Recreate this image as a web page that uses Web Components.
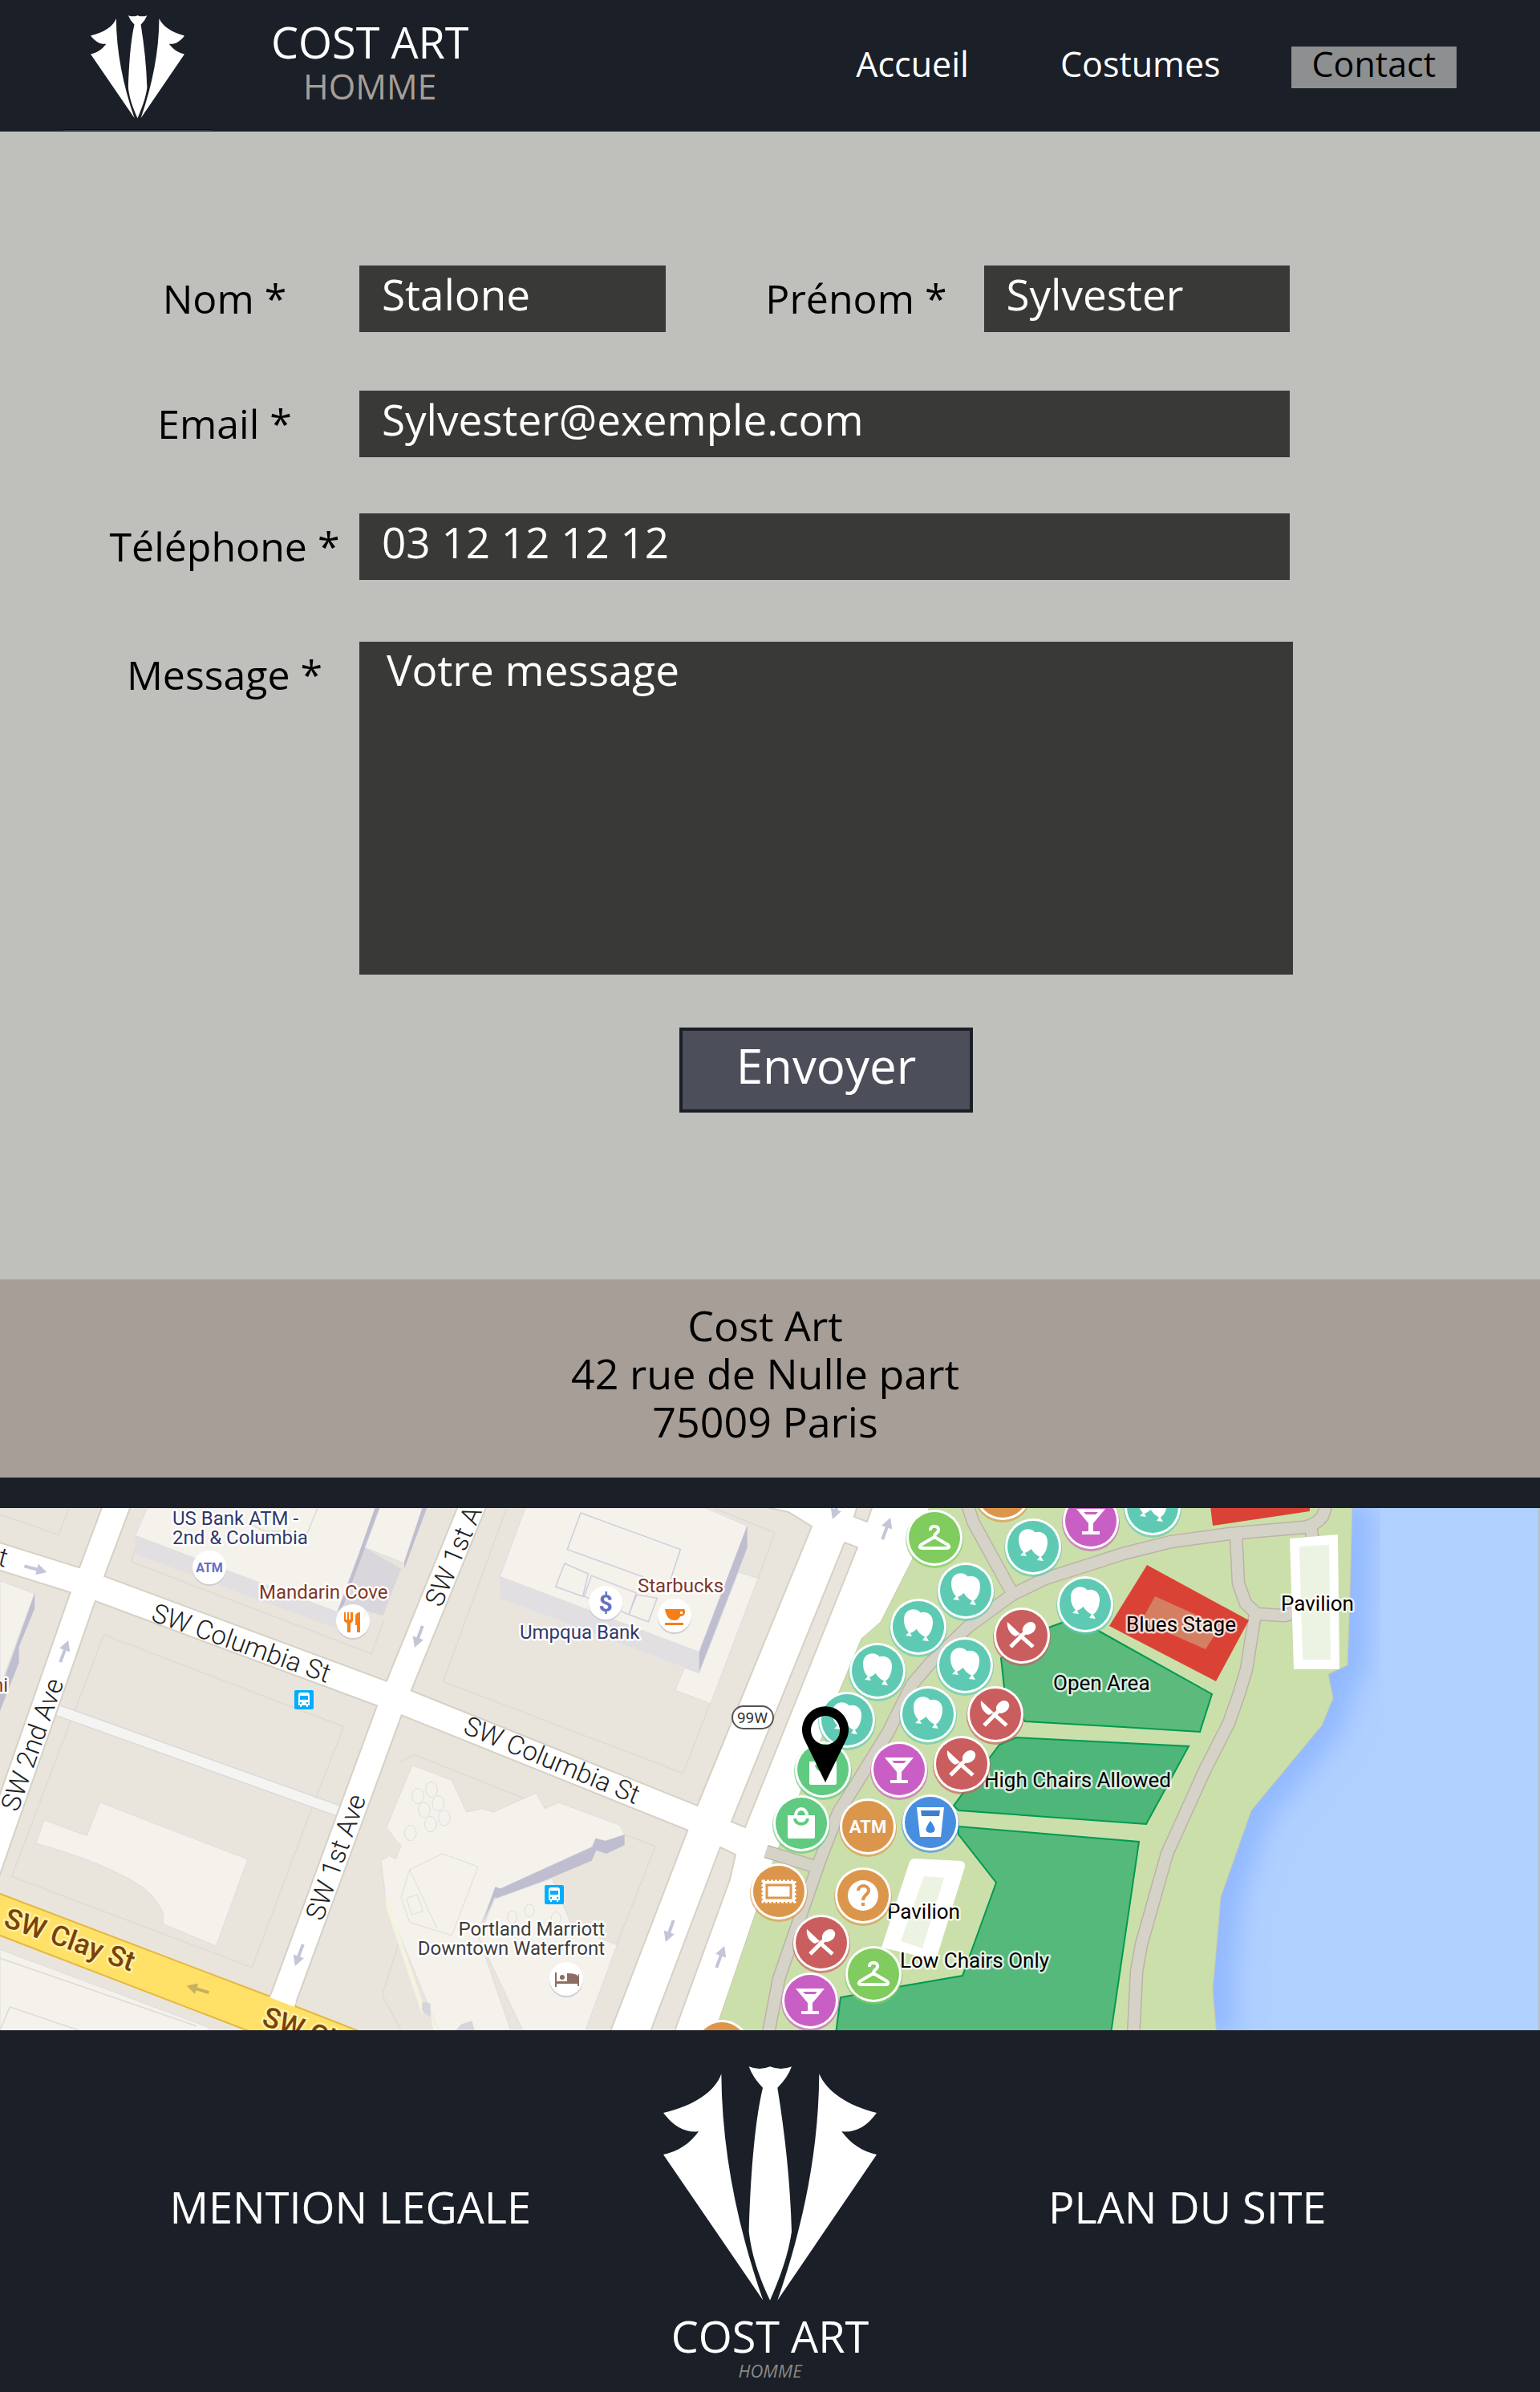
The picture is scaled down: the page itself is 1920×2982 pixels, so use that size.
<!DOCTYPE html>
<html lang="fr">
<head>
<meta charset="utf-8">
<meta name="viewport" content="width=device-width, initial-scale=1">
<title>Cost Art Homme - Contact</title>
<style>
body{margin:0;background:#bfbfbc;font-family:"Open Sans","Noto Sans",sans-serif;color:#000;
--ink:#1b1f27;--field:#393937;--taupe:#a69e97;--title:54px;--input:53px;--text:52px;--label-size:50px;--nav:43px}
</style>
</head>
<body>
<cost-header>
  <cost-link href="#accueil">Accueil</cost-link>
  <cost-link href="#costumes">Costumes</cost-link>
  <cost-link href="#contact" current>Contact</cost-link>
</cost-header>
<cost-form></cost-form>
<cost-address><span>Cost Art</span><span>42 rue de Nulle part</span><span>75009 Paris</span></cost-address>
<cost-map></cost-map>
<cost-footer></cost-footer>
<script>
const define = (name, html, setup) => customElements.define(name, class extends HTMLElement {
  constructor() {
    super();
    this.attachShadow({mode: 'open'});
  }
  connectedCallback() {
    this.shadowRoot.innerHTML = typeof html === 'function' ? html(this) : html;
    if (setup) setup(this);
  }
});

define('cost-logo', `
<style>:host{display:block}svg{display:block;width:100%;height:auto}</style>
<svg viewBox="205 107 798 876" fill="#fff" role="img" aria-label="Cost Art">
<path d="M422 135C400 200 320 255 205 281C245 333 285 355 337 351C305 395 260 427 205 437L578 982C480 700 424 420 422 135Z"/>
<path d="M788 135C815 200 895 255 1003 281C965 333 925 355 872 351C905 395 950 427 1003 437L632 982C730 700 786 420 788 135Z"/>
<path d="M525 108Q565 124 604 108Q645 124 685 108Q670 150 632 187C660 360 680 540 685 725C672 815 640 900 604 982C565 900 535 815 525 725C530 540 545 320 577 187Q540 150 525 108Z"/>
</svg>`);

define('cost-link', el => `
<style>
:host{display:block}
a{display:block;font-size:var(--nav);line-height:44px;padding:0 26px 8px;color:#fff;text-decoration:none}
:host([current]) a{background:#8e8f91;color:#000}
</style>
<a href="${el.getAttribute('href')}"${el.hasAttribute('current') ? ' aria-current="page"' : ''}><slot></slot></a>`);

define('cost-header', `
<style>
:host{display:flex;justify-content:space-between;align-items:flex-start;background:var(--ink);height:164px;padding:0 104px 0 79px;box-sizing:border-box}
.brand{display:flex;gap:74px}
.mark{width:185px;height:162px;box-sizing:border-box;padding:19px 34px 0;border-bottom:1px solid #0b0e13;box-shadow:0 1px #3a3e46}
.name{padding-top:24px;text-align:center;line-height:56px;color:#fff;font-size:var(--title)}
.name small{display:block;font-size:var(--nav);color:var(--taupe)}
nav{display:flex;gap:62px;padding-top:58px}
</style>
<div class="brand"><div class="mark"><cost-logo></cost-logo></div>
<div class="name">COST ART<small>HOMME</small></div></div>
<nav><slot></slot></nav>`);

define('cost-field', el => {
  const id = el.getAttribute('name'), type = el.getAttribute('type') || 'text';
  const control = type === 'area'
    ? `<textarea id="${id}" name="${id}" required>${el.getAttribute('value')}</textarea>`
    : `<input id="${id}" name="${id}" type="${type}" value="${el.getAttribute('value')}" required>`;
  return `
<style>
:host{display:flex;gap:24px;align-items:flex-start;flex:1 1 calc(var(--label,288px) + 24px);min-width:0}
label{flex:none;width:var(--label,288px);box-sizing:border-box;padding:7px var(--label-end,0) 0 0;font-size:var(--label-size);line-height:68px;white-space:nowrap;display:flex;justify-content:var(--label-align,center)}
input,textarea{flex:1 1 0;width:0;min-width:0;box-sizing:border-box;border:0;border-radius:0;margin:0;background:var(--field);color:#fff;font:var(--input)/70px "Open Sans","Noto Sans",sans-serif;outline-offset:2px}
input{height:83px;padding:0 28px 13px}
textarea{height:415px;padding:0 34px;resize:none;overflow:hidden}
</style>
<label for="${id}">${el.getAttribute('label')} *</label>${control}`;
});

define('cost-form', `
<style>
:host{display:block;padding:167px 312px 208px 136px}
form{display:grid;grid-template-rows:156px 153px 160px auto auto}
.row{display:flex;gap:24px;align-items:flex-start}
.end{--label:349px;--label-end:22px;--label-align:flex-end}
.wide{margin-right:-4px}
.send{padding:66px 0 0 312px;display:flex;justify-content:center}
button{width:366px;height:106px;padding:0 0 12px;border:4px solid var(--ink);border-radius:0;background:#4c4e5a;color:#fff;font:60px/80px "Open Sans","Noto Sans",sans-serif}
</style>
<form>
<div class="row"><cost-field name="nom" label="Nom" value="Stalone"></cost-field>
<cost-field class="end" name="prenom" label="Prénom" value="Sylvester"></cost-field></div>
<div class="row"><cost-field name="email" type="email" label="Email" value="Sylvester@exemple.com"></cost-field></div>
<div class="row"><cost-field name="telephone" type="tel" label="Téléphone" value="03 12 12 12 12"></cost-field></div>
<div class="row wide"><cost-field name="message" type="area" label="Message" value="Votre message"></cost-field></div>
<div class="send wide"><button type="submit">Envoyer</button></div>
</form>`);

define('cost-address', `
<style>
:host{display:block;background:var(--taupe);border-bottom:38px solid var(--ink)}
address{display:flex;flex-direction:column;align-items:center;padding:27px 12px 40px 0;font-style:normal;font-size:var(--text);line-height:60px}
</style>
<address><slot></slot></address>`);

/* Marker glyphs, drawn around the centre of a disc of radius 32. */
const glyphs = {
  balloon: '<g fill="#fff"><path d="M-18-9C-18-25 2-25 4-14C6-4-4 7-11 8C-16 4-18-3-18-9ZM-11 6L-8 12L-16 11Z"/><path d="M-5-8C-4-22 18-22 18-6C18 3 14 11 9 13C2 10-5 3-5-8ZM9 11L13 18L5 17Z"/></g>',
  food: '<path d="M-14 14L6-6M14 14L-3-1" stroke="#fff" stroke-width="5"/><ellipse cx="9" cy="-9" rx="9" ry="7" transform="rotate(-40 9 -9)" fill="#fff"/><path d="M-18-17L-2-2L-8 1C-15-2-19-9-18-17Z" fill="#fff"/>',
  hanger: '<path d="M-5-9C-6-16 6-16 5-9C4-5 0-6 0-1L-17 9Q-20 13-15 13H15Q20 13 17 9L0-1" fill="none" stroke="#fff" stroke-width="4" stroke-linejoin="round"/>',
  drink: '<path d="M-18-15H18L3 3V13H11V17H-11V13H-3V3ZM-9-11L-6-8H6L9-11Z" fill="#fff" fill-rule="evenodd"/>',
  bag: '<path d="M-17-10H17V17Q17 19 14 19H-14Q-17 19-17 17Z" fill="#fff"/><path d="M-7-9C-7-21 7-21 7-9" fill="none" stroke="#fff" stroke-width="4"/><path d="M-8-6C-7 3 7 3 8-6" fill="none" stroke="#5fca80" stroke-width="4"/>',
  water: '<path d="M-17-19H17L13 18H-13Z" fill="#fff"/><path d="M-12-15H12L11-8H-11Z" fill="#3f7fd0"/><path d="M0-2Q11 12 0 13Q-11 12 0-2Z" fill="#3f87e0"/>',
  ticket: '<path d="M-20-13H20V13H-20Z" fill="#fff" stroke="#fff" stroke-width="3" stroke-dasharray="3 2"/><path d="M-15-8H15V8H-15Z" fill="#fff" stroke="#dc964c" stroke-width="3"/>',
  help: '<circle r="19" fill="#fff"/><path d="M-6-6C-6-14 7-14 7-6C7-1 0-1 0 6M0 9V13" fill="none" stroke="#dc964c" stroke-width="4"/>',
  none: '', atm: ''
};
const marker = (kind, colour, x, y) =>
  `<g transform="translate(${x} ${y})"><circle r="36" cy="2" fill="${colour}" opacity=".65"/><circle r="35" fill="#fff"/><circle r="32" fill="${colour}"/>${glyphs[kind]}</g>`;
const T='#5ecab3', R='#ca5e5e', P='#c95fc4', O='#dc964c', L='#80cc5f', G='#5fca80', B='#488ee0';
const markers = [
  ['none',O,1250,-20],['drink',P,1360,16],['balloon',T,1437,-1],['hanger',L,1165,37],['balloon',T,1288,48],
  ['balloon',T,1204,103],['balloon',T,1353,120],['balloon',T,1145,148],['balloon',T,1203,196],['food',R,1274,159],
  ['balloon',T,1094,203],['balloon',T,1056,264],['balloon',T,1157,257],['food',R,1241,257],['bag',G,1026,326],
  ['drink',P,1121,326],['food',R,1199,319],['bag',G,999,393],['atm',O,1082,397],['water',B,1160,392],
  ['ticket',O,971,478],['help',O,1076,483],['food',R,1024,542],['drink',P,1010,614],['hanger',L,1089,581],['none',O,900,673]
].map(m => marker(...m)).join('');
const arrow = (x, y, a, c = '#c3c6d8') =>
  `<path transform="translate(${x} ${y}) rotate(${a})" fill="${c}" d="M-14-2H2V-7L15 0L2 7V2H-14Z"/>`;
const arrows = arrow(44,76,15)+arrow(80,179,-70)+arrow(522,160,110)+arrow(373,557,110)+arrow(247,600,197,'#c7b05f')+
  arrow(835,527,110)+arrow(898,560,-70)+arrow(1105,26,-70)+arrow(1043,0,110);
const bus = (x, y) => `<g transform="translate(${x} ${y})"><rect width="24" height="24" rx="2" fill="#00aeff"/><path d="M5 6Q5 3 8 3H16Q19 3 19 6V19H17V21H15V19H9V21H7V19H5Z" fill="#fff"/><path d="M7 7H17V12H7ZM7 15h2v2H7zM15 15h2v2h-2z" fill="#00aeff"/></g>`;
const shore = 'M1686-5L1683 110L1680 196L1656 207L1662 237L1648 271L1560 377L1522 485L1517 544L1512 600L1517 660';
const walks = `
<path d="M1655-8L1649 10Q1640 22 1625 24L1533 32L1460 42L1400 57L1360 70L1303 88L1262 108L1207 148L1160 193L1137 220L1107 280L1073 335L1045 380L1023 437L993 523L971 587L957 660"/>
<path d="M1206-5L1213 17L1262 106"/><path d="M955 428L1019 448"/>
<path d="M1541 34L1544 94L1553 119L1567 132L1600 134Q1612 134 1626 117L1642 95L1643 72L1634 24"/>
<path d="M1565 132L1554 201L1545 231L1532 268L1502 327L1455 431L1423 544L1417 578L1413 660"/>`;

define('cost-map', `
<style>
:host{display:block;background:#1b1f27}
svg{display:block;width:100%;height:auto}
text{font-family:Roboto,sans-serif;font-size:24px}
.halo{paint-order:stroke;stroke:#fff;stroke-width:5px;stroke-linejoin:round}
.road{font-size:33px;font-weight:300;fill:#222}
.clay{font-size:35px;font-weight:500;fill:#7a4306;paint-order:stroke;stroke:#fff0a8;stroke-width:5px}
.bank{fill:#33386a}.eat{fill:#7f3529}.hotel{fill:#3d3d3d}
.area{font-size:26px;fill:#000;stroke-opacity:.75}
.roof{fill:#f4f2eb;stroke:#dedce2;stroke-width:1px}.front{fill:#e1dfe1}.side{fill:#bfbed0}
.z path,.z circle{vector-effect:non-scaling-stroke}
.lot{fill:none;stroke:#dedad5;stroke-width:1.5px}
</style>
<svg viewBox="0 0 1920 651" role="img" aria-label="Plan du quartier">
<defs><clipPath id="water"><path d="${shore}H1930V-5Z"/></clipPath><filter id="soft" x="-20%" y="-20%" width="140%" height="140%"><feGaussianBlur stdDeviation="17"/></filter></defs>
<rect width="1920" height="651" fill="#e9e5dd"/>
<g class="z" transform="scale(.40816 .43367) translate(0 -46)">
<path class="lot" d="M0 65L180 123L210 46M445 80L400 200L1135 465L1172 370M317 410L232 620L215 660L36 1105L770 1367L950 915L1050 675Z"/>
<path class="roof" d="M450 46H1155L1115 165L1030 345L413 125Z"/><path class="front" d="M413 125L1030 345L1025 392L413 178Z"/>
<path class="side" d="M1145 46H1162L1115 165L1050 325L1030 345L1095 180Z"/><path class="roof" d="M1160 46H1290L1235 205L1115 160Z"/>
<path fill="#d9d6dc" d="M1115 160L1225 220L1170 355L1050 325Z"/><path class="side" d="M1290 46H1304L1235 220V200Z"/>
<path class="lot" d="M970 46L938 120M760 90L810 113H890"/>
<path class="roof" d="M0 255L106 292L0 560Z"/><path class="side" d="M106 290V335L58 445V490L0 630V570L50 440Z"/>
<path class="roof" d="M135 943L265 988L305 892L757 1056L660 1305L498 1242V1210Q470 1150 405 1118Q300 1060 110 1010Z"/>
<path class="roof" d="M0 1315L640 1540V1570H0Z"/><path class="lot" d="M0 1340L600 1535M30 1480L0 1547M30 1480L240 1547"/>
</g>
<g class="z" transform="translate(500 0) scale(.33333 .43367) translate(0 -46)">
<path class="lot" d="M395 46L157 545L1055 808L1155 610M1170 46L1398 117L1335 250M0 775L50 755L540 905M835 985L952 1018L680 1547M0 1547L-70 1448L30 1200"/>
<path class="roof" d="M465 46H1140L1295 97L1115 460L370 243Z"/><path class="front" d="M370 243L1115 460V520L370 305Z"/><path class="side" d="M1295 97V160L1115 520V460Z"/>
<path class="roof" d="M1262 230L1335 248L1158 608L1025 570L1060 505L1115 520Z"/>
<path class="lot" style="stroke:#cfcddd" d="M672 60L622 165L1000 270L1045 165ZM612 205L578 272L680 300L700 235ZM712 240L685 300L852 352L880 290ZM882 295L852 352L925 373L958 305Z"/>
<path class="roof" d="M42 785L190 828L245 920L305 910L345 920L505 865L538 910L590 893L820 958L836 985L765 1003L728 996L715 1020L372 1140H352L300 1240L290 1280L410 1547H140L-55 1180L-75 1060L-45 1045L-20 1055L0 1018L-55 965Z"/>
<path class="side" d="M836 985V1015L768 1040L730 1030L713 1060L372 1170L350 1165L305 1240L352 1135L372 1140L715 1020L728 996L765 1003Z"/>
<path class="roof" d="M565 1110L640 1250L808 1302L690 1547H455L290 1280L350 1170Z"/>
<path class="roof" d="M155 1040L288 1077L190 1275L32 1237L0 1165L32 1085ZM32 1085L135 1255M20 1168L60 1157L82 1205L40 1215Z"/>
<path fill="#f3f4df" d="M-60 1150L80 1465V1505L-55 1195ZM110 1490L140 1547H120Z"/><path fill="#d6d4dc" d="M80 1465L110 1470V1510L78 1490ZM225 1530L265 1520L275 1547H205Z"/>
<g class="roof"><circle cx="63" cy="874" r="22"/><circle cx="114" cy="855" r="22"/><circle cx="139" cy="895" r="22"/><circle cx="87" cy="914" r="22"/><circle cx="162" cy="937" r="22"/><circle cx="111" cy="955" r="22"/><circle cx="35" cy="980" r="22"/><circle cx="416" cy="1222" r="18"/><circle cx="480" cy="1203" r="18"/><circle cx="580" cy="1225" r="18"/></g>
</g>
<g fill="none"><path stroke="#dad8da" stroke-width="15" d="M66 250L426 379"/><path stroke="#f4f4f2" stroke-width="12" d="M66 250L426 379"/>
<g stroke="#d5d1c5" stroke-width="35"><path d="M-40 48L107 94L492 237L900 401"/><path d="M152-20L108 97L-50 550"/><path d="M596-20L491 237L345 634"/></g></g>
<path fill="#fff" stroke="#d5d1c5" stroke-width="2" d="M940-5L960 0L983 5L1012 23L869 372L856 405L760 655H1200V-5Z"/>
<g fill="none" stroke="#fff" stroke-width="31"><path d="M-40 48L107 94L492 237L900 401"/><path d="M152-20L108 97L-50 550"/><path d="M596-20L491 237L345 634"/></g>
<g fill="#e9e5dd" stroke="#d5d1c5" stroke-width="2"><path d="M1069-3L1065 11L1081 17L1088-3Z"/><path d="M1053 43L1069 49L929 398L912 391Z"/><path d="M898 423L917 432L910 463L840 655H810Z"/></g>
<path fill="#ffe168" stroke="#e6b73f" stroke-width="2" d="M-5 479L337 609L455 655H318L-5 531Z"/>
<path fill="#fff" d="M340 604L369 615L367 622L336 610Z"/>
<rect x="1500" width="420" height="651" fill="#b0d0ff"/>
<g clip-path="url(#water)"><path d="${shore}" fill="none" stroke="#90b7ff" stroke-width="48" filter="url(#soft)"/></g>
<path fill="#cbdfaa" stroke="#c8c8b0" stroke-width="1" d="M1160-5L1137 65L1098 142L1074 163L1047 227L1023 290L964 440L889 660H1517L1512 600L1517 544L1522 485L1560 377L1648 271L1662 237L1656 207L1680 196L1683 110L1686-5Z"/>
<g fill="none" stroke="#bdb2a8" stroke-width="17">${walks}</g><g fill="none" stroke="#d5d3c8" stroke-width="14">${walks}</g>
<g fill="#5bba7c" stroke="#009a50" stroke-width="2"><path d="M1248 187L1310 148L1340 137L1373 155L1511 232L1496 279L1400 273L1278 266L1253 233Z"/><path fill="#4eb679" d="M1246 295L1267 286L1482 297L1429 394L1195 377L1189 371Z"/><path fill="#56b97c" d="M1195 397L1420 416L1385 655H1042L1048 610L1119 597L1200 583L1221 525L1242 467L1195 407Z"/></g>
<g fill="#db4236"><path d="M1430 71L1557 140L1516 216L1383 147Z"/><path d="M1509-2L1512 22L1633 4V-2Z"/><path fill="#d47f62" d="M1440 110L1522 147L1503 176L1423 141Z"/></g>
<path fill="#fff" d="M1608 38L1668 33L1670 201H1613ZM1141 437L1198 440Q1204 441 1203 447L1167 563L1099 548L1134 441Q1136 437 1141 437Z"/>
<path fill="#ecf3e2" d="M1620 48L1657 46L1659 189H1624ZM1152 459L1177 461L1150 549L1123 540Z"/>
${arrows}
<text class="road" transform="translate(187 140) rotate(19.5)">SW Columbia St</text>
<text class="road" transform="translate(576 280) rotate(22.5)">SW Columbia St</text>
<text class="road" transform="translate(22 380) rotate(-70.5)">SW 2nd Ave</text>
<text class="road" transform="translate(402 516) rotate(-70.5)">SW 1st Ave</text>
<text class="road" transform="translate(550 125) rotate(-67)">SW 1st Ave</text>
<text class="road" transform="translate(-4 71) rotate(15)">t</text>
<text class="clay" transform="translate(3 521) rotate(19.5)">SW Clay St</text>
<text class="clay" transform="translate(325 644) rotate(19.5)">SW Clay St</text>
<g fill="#cfccd2"><circle cx="261" cy="76" r="21"/><circle cx="440" cy="143" r="21"/><circle cx="755" cy="120" r="21"/><circle cx="841" cy="136" r="21"/><circle cx="706" cy="589" r="21"/></g>
<g fill="#fff"><circle cx="261" cy="74" r="21"/><circle cx="440" cy="141" r="21"/><circle cx="755" cy="118" r="21"/><circle cx="841" cy="134" r="21"/><circle cx="706" cy="587" r="21"/></g>
<text x="261" y="80" text-anchor="middle" style="font:700 16px Roboto,sans-serif" fill="#6570c4">ATM</text>
<text x="755" y="129" text-anchor="middle" style="font-size:30px;font-weight:700" fill="#6570c4">$</text>
<path fill="#f57f17" d="M429 130h2v9h2v-9h2v9h2v-9h3v11l-3 3v11h-4v-11l-4-3zM443 155v-21q1-4 6-4v25h-4v-9h-2zM829 126H853Q854 126 854 130Q854 135 848 135Q846 140 841 140Q831 140 829 126ZM848 129V132H851V129ZM829 143H852V146H829Z"/>
<path fill="#8d6e63" d="M692 579h2v11h13v-10q12 0 14 4v-3h1v15h-2v-3h-26v4h-2zM701 582a3 3 0 1 1-.1 6a3 3 0 0 1 .1-6z"/>
${bus(367,227)}${bus(679,470)}
<rect x="913" y="247" width="51" height="28" rx="14" fill="#fff" stroke="#555" stroke-width="2"/><text x="938" y="268" text-anchor="middle" style="font-size:19px" fill="#333">99W</text>
<g class="halo"><text class="bank" x="215" y="21">US Bank ATM -</text><text class="bank" x="215" y="45">2nd &amp; Columbia</text><text class="bank" x="648" y="163">Umpqua Bank</text>
<text class="eat" x="323" y="113">Mandarin Cove</text><text class="eat" x="795" y="105">Starbucks</text><text class="eat" x="10" y="229" text-anchor="end">ni</text>
<text class="hotel" x="754" y="533" text-anchor="end">Portland Marriott</text><text class="hotel" x="754" y="557" text-anchor="end">Downtown Waterfront</text>
<text class="area" x="1404" y="154">Blues Stage</text><text class="area" x="1597" y="128">Pavilion</text><text class="area" x="1313" y="227">Open Area</text><text class="area" x="1460" y="348" text-anchor="end">High Chairs Allowed</text><text class="area" x="1106" y="512">Pavilion</text><text class="area" x="1122" y="573">Low Chairs Only</text></g>
${markers}
<text x="1082" y="405" text-anchor="middle" style="font:700 22px Roboto,sans-serif" fill="#fff">ATM</text>
<path fill-rule="evenodd" d="M1029 342L1004 291A29 29 0 1 1 1054 291ZM1029 259a18 18 0 1 0 .1 0Z"/>
<path fill="#bfbfbc" d="M1918 0h2v651h-2z"/>
</svg>`);

define('cost-footer', `
<style>
:host{display:grid;grid-template-columns:1fr auto 1fr;align-items:start;background:var(--ink);color:#fff}
a{color:#fff;text-decoration:none;font-size:var(--title);line-height:68px;padding-top:186px;white-space:nowrap}
.legal{justify-self:end;padding-right:165px}
.plan{padding-left:214px}
.brand{padding:45px 0 12px;text-align:center;font-size:var(--title);line-height:56px}
cost-logo{width:266px;margin-bottom:16px}
small{display:block;font-size:22px;line-height:30px;font-style:italic;color:#8c8985}
</style>
<a class="legal" href="#mentions">MENTION LEGALE</a>
<div class="brand"><cost-logo></cost-logo>COST ART<small>HOMME</small></div>
<a class="plan" href="#plan">PLAN DU SITE</a>`);
</script>
</body>
</html>
